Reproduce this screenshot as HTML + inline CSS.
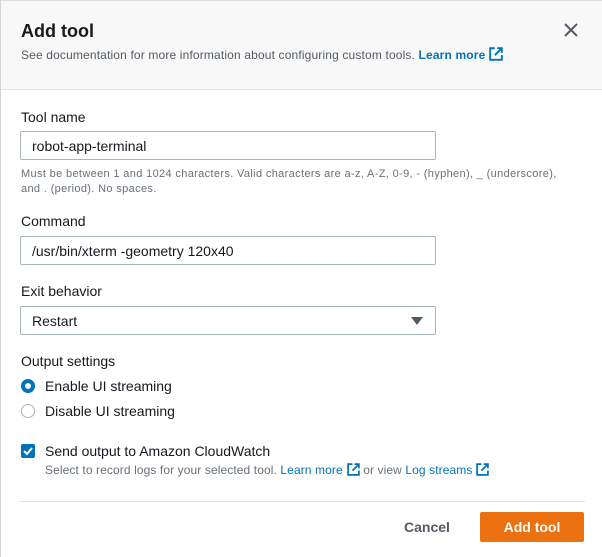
<!DOCTYPE html>
<html><head><style>
*{box-sizing:border-box;margin:0;padding:0}
body{width:602px;height:557px;background:#fff;font-family:"Liberation Sans",sans-serif;color:#16191f;position:relative;overflow:hidden}
.a{position:absolute}
.hdr{left:1px;top:0;width:601px;height:90px;background:#f8f8f8;border-bottom:1px solid #e4e4e4;border-top:1px solid #e0e0e0}
.lbl{font-size:14px;color:#16191f;left:21px}
.inp{left:20px;width:416px;height:29px;border:1px solid #aab7b8;border-radius:2px;font-size:14px;padding:6px 11px;}
.help{font-size:11px;color:#687078;line-height:15px}
.lnk{color:#0073bb}
.ext{display:inline-block;width:12px;height:12px;vertical-align:-2px;margin-left:4px}
</style></head><body>
<div class="a" style="left:0;top:0;width:1px;height:557px;background:#d5d5d5"></div>
<div class="a hdr"></div>
<div class="a" style="left:21px;top:21px;font-size:18px;font-weight:bold">Add tool</div>
<div class="a" style="left:563px;top:22px"><svg width="16" height="16" viewBox="0 0 16 16"><path d="M2 2L14 14M14 2L2 14" stroke="#545b64" stroke-width="2"/></svg></div>
<div class="a help" style="left:21px;top:47px;color:#545b64;font-size:12px;letter-spacing:0.15px">See documentation for more information about configuring custom tools. <b class="lnk">Learn more</b><svg class="ext" viewBox="0 0 12 12" style="width:14px;height:14px"><path d="M5 1H1v10h10V7M7 1h4v4M11 1L5 7" stroke="#0073bb" stroke-width="1.6" fill="none"/></svg></div>

<div class="a lbl" style="top:109px">Tool name</div>
<div class="a inp" style="top:131px">robot-app-terminal</div>
<div class="a help" style="left:21px;top:167px;width:580px;letter-spacing:0.35px">Must be between 1 and 1024 characters. Valid characters are a-z, A-Z, 0-9, - (hyphen), _ (underscore),<br>and . (period). No spaces.</div>

<div class="a lbl" style="top:213px">Command</div>
<div class="a inp" style="top:236px">/usr/bin/xterm -geometry 120x40</div>

<div class="a lbl" style="top:283px">Exit behavior</div>
<div class="a inp" style="top:306px">Restart</div>
<div class="a" style="left:411px;top:317px;width:0;height:0;border-left:6px solid transparent;border-right:6px solid transparent;border-top:8px solid #545b64"></div>

<div class="a lbl" style="top:353px">Output settings</div>
<div class="a" style="left:21px;top:379px;width:14px;height:14px;border-radius:50%;border:4px solid #0073bb;background:#fff"></div>
<div class="a" style="left:45px;top:378px;font-size:14px">Enable UI streaming</div>
<div class="a" style="left:21px;top:404px;width:14px;height:14px;border-radius:50%;border:1px solid #aab7b8;background:#fff"></div>
<div class="a" style="left:45px;top:403px;font-size:14px">Disable UI streaming</div>

<div class="a" style="left:21px;top:444px;width:14px;height:14px;border-radius:2px;background:#0073bb"><svg width="14" height="14" viewBox="0 0 14 14"><path d="M3 7l3 3 5-6" stroke="#fff" stroke-width="2" fill="none"/></svg></div>
<div class="a" style="left:45px;top:443px;font-size:14px">Send output to Amazon CloudWatch</div>
<div class="a help" style="left:45px;top:463px;font-size:12px;letter-spacing:0.1px">Select to record logs for your selected tool. <span class="lnk">Learn more</span><svg class="ext" viewBox="0 0 12 12" style="width:13px;height:13px"><path d="M5 1H1v10h10V7M7 1h4v4M11 1L5 7" stroke="#0073bb" stroke-width="1.6" fill="none"/></svg> or view <span class="lnk">Log streams</span><svg class="ext" viewBox="0 0 12 12" style="width:13px;height:13px"><path d="M5 1H1v10h10V7M7 1h4v4M11 1L5 7" stroke="#0073bb" stroke-width="1.6" fill="none"/></svg></div>

<div class="a" style="left:20px;top:501px;width:565px;height:1px;background:#e4e4e4"></div>
<div class="a" style="left:404px;top:519px;font-size:14px;font-weight:bold;color:#545b64">Cancel</div>
<div class="a" style="left:480px;top:512px;width:104px;height:30px;background:#ec7211;border-radius:2px;color:#fff;font-size:14px;font-weight:bold;text-align:center;line-height:30px">Add tool</div>
</body></html>
